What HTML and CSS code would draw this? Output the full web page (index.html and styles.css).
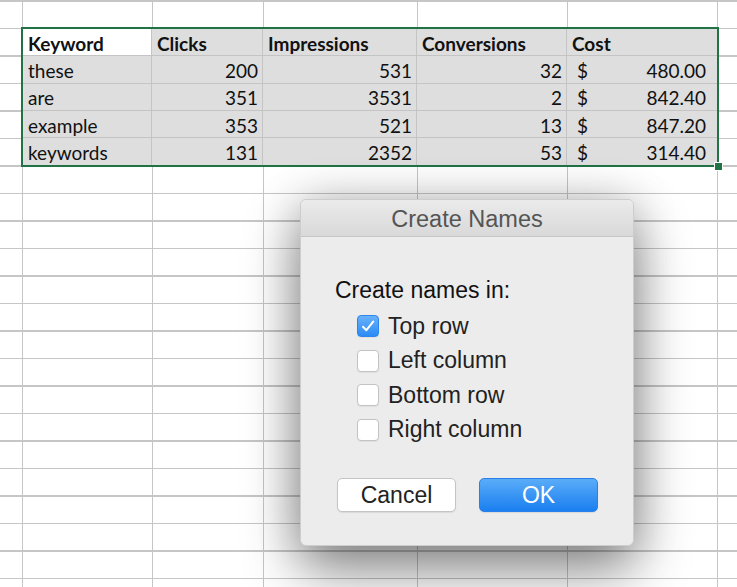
FILE: index.html
```html
<!DOCTYPE html>
<html>

<head>
    <title>Create Names</title>
    <link rel="stylesheet" href="styles.css">
</head>

<body>
    <div class="sheet">
        <!-- selected range A1:E5 -->
        <div class="selection">
            <div class="cells">
                <div class="cell head active">Keyword</div>
                <div class="cell head">Clicks</div>
                <div class="cell head">Impressions</div>
                <div class="cell head">Conversions</div>
                <div class="cell head">Cost</div>

                <div class="cell">these</div>
                <div class="cell num">200</div>
                <div class="cell num">531</div>
                <div class="cell num">32</div>
                <div class="cell money"><span>$</span><span>480.00</span></div>

                <div class="cell">are</div>
                <div class="cell num">351</div>
                <div class="cell num">3531</div>
                <div class="cell num">2</div>
                <div class="cell money"><span>$</span><span>842.40</span></div>

                <div class="cell">example</div>
                <div class="cell num">353</div>
                <div class="cell num">521</div>
                <div class="cell num">13</div>
                <div class="cell money"><span>$</span><span>847.20</span></div>

                <div class="cell">keywords</div>
                <div class="cell num">131</div>
                <div class="cell num">2352</div>
                <div class="cell num">53</div>
                <div class="cell money"><span>$</span><span>314.40</span></div>
            </div>
            <span class="fill-handle"></span>
        </div>

        <div class="dialog">
            <div class="dialog-title">Create Names</div>
            <div class="dialog-body">
                <p class="prompt">Create names in:</p>
                <ul class="options">
                    <li class="option">
                        <span class="box checked">
                            <svg width="22" height="22" viewBox="0 0 22 22">
                                <path d="M6 11.8 L9.4 15.2 L16.2 6.6" fill="none" stroke="#fff" stroke-width="2" stroke-linecap="round" stroke-linejoin="round"/>
                            </svg>
                        </span>
                        Top row
                    </li>
                    <li class="option"><span class="box"></span>Left column</li>
                    <li class="option"><span class="box"></span>Bottom row</li>
                    <li class="option"><span class="box"></span>Right column</li>
                </ul>
                <div class="buttons">
                    <button class="btn">Cancel</button>
                    <button class="btn primary">OK</button>
                </div>
            </div>
        </div>
    </div>
</body>

</html>
```

FILE: styles.css
```css
/* worksheet behind the dialog */
body {
    margin: 0;
    background-color: #fff;
}

.sheet {
    position: relative;
    height: 587px;
    overflow: hidden;
    padding-top: 27px;
    box-sizing: border-box;
    font-family: Lato, "Liberation Sans", sans-serif;
    background-color: #fff;
    /* empty grid: column lines, then row lines */
    background-image:
        linear-gradient(to right,
            transparent 22px, #c6c6c6 22px 23.5px,
            transparent 23.5px 152px, #c6c6c6 152px 153.5px,
            transparent 153.5px 263px, #c6c6c6 263px 264.5px,
            transparent 264.5px 417px, #c6c6c6 417px 418.5px,
            transparent 418.5px 567px, #c6c6c6 567px 568.5px,
            transparent 568.5px 717px, #c6c6c6 717px 718.5px,
            transparent 718.5px),
        repeating-linear-gradient(to bottom,
            #c6c6c6 0 1.5px, transparent 1.5px 27.5px);
}

.selection {
    position: relative;
    width: 694px;
    margin-left: 21px;
    border: 2px solid #217346;
}

.cells {
    display: grid;
    grid-template-columns: 129px 111px 154px 150px 150px;
    grid-auto-rows: 27.3px;
    background-color: #dedede;
}

.cell {
    display: flex;
    align-items: center;
    padding: 2px 5px 0;
    border-right: 1px solid #c4c4c4;
    border-bottom: 1px solid #c4c4c4;
    box-sizing: border-box;
    font-size: 19px;
    color: #111;
    white-space: nowrap;
}

.cell:nth-child(5n) {
    border-right: none;
}

.cell:nth-last-child(-n+5) {
    border-bottom: none;
}

.cell.head {
    font-weight: bold;
}

.cell.active {
    background-color: #fff;
}

.cell.num {
    justify-content: flex-end;
    padding-right: 4px;
}

.cell.money {
    justify-content: space-between;
    padding: 2px 11px 0 10px;
}

.fill-handle {
    position: absolute;
    right: -6px;
    bottom: -6px;
    width: 7px;
    height: 7px;
    background-color: #217346;
    border: 1px solid #fff;
}

/* Create Names sheet dialog */
.dialog {
    position: absolute;
    left: 300px;
    top: 199px;
    width: 334px;
    height: 347px;
    box-sizing: border-box;
    background-color: #ececec;
    border: 1px solid #cdcdcd;
    border-radius: 6px;
    box-shadow: 0 24px 55px rgba(0, 0, 0, 0.45), 0 0 45px rgba(0, 0, 0, 0.18);
    font-family: "Liberation Sans", Arial, sans-serif;
    overflow: hidden;
}

.dialog-title {
    height: 36px;
    line-height: 38px;
    text-align: center;
    font-size: 23.5px;
    color: #555;
    background: linear-gradient(#ebebeb, #d9d9d9);
    border-bottom: 1px solid #c6c6c6;
}

.dialog-body {
    padding: 40px 0 0 34px;
}

.prompt {
    margin: 0;
    height: 26px;
    line-height: 26px;
    font-size: 23px;
    color: #111;
}

.options {
    list-style: none;
    margin: 6px 0 0 22px;
    padding: 0;
}

.option {
    display: flex;
    align-items: center;
    gap: 9px;
    height: 34.5px;
    font-size: 23px;
    color: #222;
}

.box {
    width: 22px;
    height: 22px;
    box-sizing: border-box;
    border: 1px solid #c3c3c3;
    border-radius: 4px;
    background-color: #fff;
    box-shadow: 0 1px 1px rgba(0, 0, 0, 0.06);
}

.box.checked {
    border-color: #2f86ea;
    background: linear-gradient(#69b1fa, #2a8bf6);
}

.box svg {
    display: block;
    margin: -1px;
}

.buttons {
    display: flex;
    gap: 23px;
    margin-top: 31px;
    margin-left: 2px;
}

.btn {
    width: 119px;
    height: 34px;
    font-family: "Liberation Sans", Arial, sans-serif;
    font-size: 23px;
    color: #222;
    background-color: #fff;
    border: 1px solid #c4c4c4;
    border-radius: 5px;
    box-shadow: 0 1px 1px rgba(0, 0, 0, 0.08);
    padding: 0;
}

.btn.primary {
    color: #fff;
    border-color: #2a80ea;
    background: linear-gradient(#5aacf8, #1a7ff0);
}
```
